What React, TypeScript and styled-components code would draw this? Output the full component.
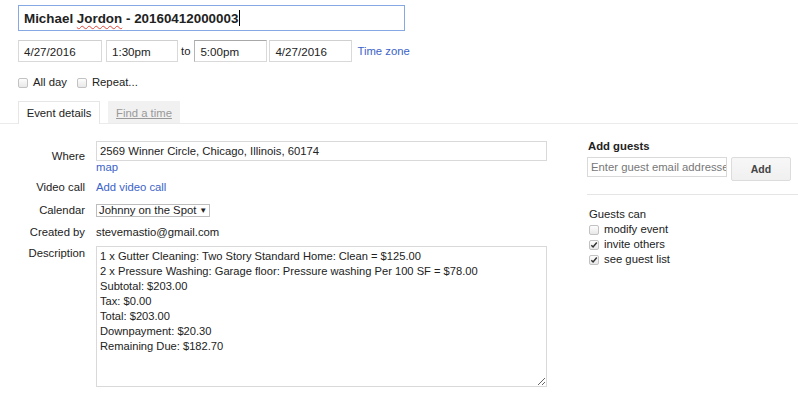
import React, { FC } from 'react';
import styled, { createGlobalStyle } from 'styled-components';

const GlobalStyle = createGlobalStyle`
  html, body {
    margin: 0;
    padding: 0;
    background: #fff;
  }
  body {
    font-family: "Liberation Sans", Arial, sans-serif;
    font-size: 11.3px;
    color: #222;
  }
`;

const Page = styled.div`
  width: 798px;
  height: 394px;
  overflow: hidden;
  padding-top: 5px;
  box-sizing: border-box;
`;

const Header = styled.div`
  padding-left: 18px;
`;

const TitleBox = styled.div`
  width: 387px;
  height: 26px;
  box-sizing: border-box;
  border: 1px solid #86a9e3;
  padding-left: 5px;
  display: flex;
  align-items: center;
  font-weight: bold;
  font-size: 13.4px;
  color: #222;
  white-space: nowrap;
`;

const Misspelled = styled.span`
  text-decoration: underline wavy #e0453a;
  text-decoration-thickness: 1px;
  text-underline-offset: 2px;
`;

const Caret = styled.span`
  display: inline-block;
  width: 1px;
  height: 16px;
  background: #000;
  margin-left: 1px;
`;

const DateRow = styled.div`
  display: flex;
  align-items: center;
  margin-top: 9px;
  height: 22px;
`;

const DateInput = styled.div<{ $w: number; $gap: number; $active?: boolean }>`
  width: ${(p) => p.$w}px;
  height: 22px;
  box-sizing: border-box;
  margin-left: ${(p) => p.$gap}px;
  border: 1px solid #d9d9d9;
  border-top-color: ${(p) => (p.$active ? '#a8a8a8' : '#d0d0d0')};
  border-left-color: ${(p) => (p.$active ? '#b4b4b4' : '#d9d9d9')};
  padding-left: 5px;
  display: flex;
  align-items: center;
  font-size: 11.6px;
  color: #222;
`;

const To = styled.span`
  margin-left: 3px;
  font-size: 11.3px;
`;

const Link = styled.a<{ $gap?: number }>`
  color: #3b63c9;
  text-decoration: none;
  margin-left: ${(p) => p.$gap ?? 0}px;
  cursor: pointer;
`;

const OptionRow = styled.div`
  display: flex;
  align-items: center;
  margin-top: 13px;
  height: 15px;
`;

const CheckItem = styled.label<{ $gap?: number }>`
  display: flex;
  align-items: center;
  margin-left: ${(p) => p.$gap ?? 0}px;
  line-height: 15px;
`;

const Box = styled.span`
  width: 10px;
  height: 10px;
  box-sizing: border-box;
  border: 1px solid #c2c2c2;
  border-radius: 2px;
  background: linear-gradient(#fdfdfd, #e8e8e8);
  margin-right: 5px;
  display: flex;
  align-items: center;
  justify-content: center;
`;

const Check: FC<{ checked?: boolean; label: string; gap?: number }> = ({ checked, label, gap }) => (
  <CheckItem $gap={gap}>
    <Box>
      {checked && (
        <svg width="8" height="8" viewBox="0 0 8 8">
          <path d="M1.3 4.2 L3.1 6 L6.8 1.6" fill="none" stroke="#333" strokeWidth="1.5" />
        </svg>
      )}
    </Box>
    {label}
  </CheckItem>
);

const TabBar = styled.div`
  display: flex;
  align-items: flex-end;
  margin-top: 11px;
  padding-left: 18px;
  height: 22px;
  border-bottom: 1px solid #ebebeb;
`;

const Tab = styled.div<{ $active?: boolean; $w: number; $gap?: number }>`
  width: ${(p) => p.$w}px;
  height: ${(p) => (p.$active ? 23 : 22)}px;
  box-sizing: border-box;
  margin-left: ${(p) => p.$gap ?? 0}px;
  margin-bottom: ${(p) => (p.$active ? -1 : 0)}px;
  display: flex;
  align-items: center;
  justify-content: center;
  padding-bottom: ${(p) => (p.$active ? 1 : 0)}px;
  background: ${(p) => (p.$active ? '#fff' : '#f1f1f1')};
  border: 1px solid ${(p) => (p.$active ? '#e6e6e6' : '#f1f1f1')};
  border-bottom: none;
  color: ${(p) => (p.$active ? '#222' : '#999')};
  text-decoration: ${(p) => (p.$active ? 'none' : 'underline')};
  font-size: 11.3px;
`;

const Body = styled.div`
  display: flex;
`;

const Details = styled.div`
  width: 587px;
`;

const Row = styled.div<{ $top: number }>`
  display: grid;
  grid-template-columns: 85px 451px;
  column-gap: 11px;
  margin-top: ${(p) => p.$top}px;
`;

const Label = styled.div<{ $pad?: number }>`
  text-align: right;
  line-height: 15px;
  padding-top: ${(p) => p.$pad ?? 0}px;
  color: #222;
`;

const TextInput = styled.div`
  height: 20px;
  box-sizing: border-box;
  border: 1px solid #d9d9d9;
  padding-left: 3px;
  display: flex;
  align-items: center;
  color: #222;
`;

const MapLink = styled(Link)`
  display: block;
  line-height: 12px;
`;

const LineLink = styled(Link)`
  line-height: 15px;
`;

const Select = styled.div`
  display: inline-flex;
  align-items: center;
  width: 114px;
  height: 13px;
  margin-top: 1px;
  box-sizing: border-box;
  border: 1px solid #bdbdbd;
  padding-left: 2px;
  line-height: 11px;
  color: #222;
  gap: 3px;
`;

const Arrow = styled.span`
  font-size: 8px;
`;

const Plain = styled.div`
  line-height: 15px;
`;

const Description = styled.textarea`
  display: block;
  width: 451px;
  height: 141px;
  margin: 0;
  box-sizing: border-box;
  border: 1px solid #d9d9d9;
  padding: 2px 3px;
  font-family: "Liberation Sans", Arial, sans-serif;
  font-size: 11.15px;
  line-height: 15px;
  color: #222;
  outline: none;
  resize: both;
`;

const Side = styled.div`
  flex: 1;
  padding-top: 15px;
`;

const SideHead = styled.div<{ $bold?: boolean }>`
  padding-left: 1px;
  line-height: 15px;
  font-weight: ${(p) => (p.$bold ? 'bold' : 'normal')};
  color: #222;
`;

const GuestRow = styled.div`
  display: flex;
  align-items: flex-start;
  margin-top: 3px;
  gap: 4px;
`;

const GuestInput = styled.input`
  width: 140px;
  height: 20px;
  box-sizing: border-box;
  margin: 0;
  border: 1px solid #d9d9d9;
  border-radius: 0;
  padding: 0 0 0 3px;
  font-family: "Liberation Sans", Arial, sans-serif;
  font-size: 11.3px;
  outline: none;
  color: #222;

  &::placeholder {
    color: #777;
  }
`;

const AddButton = styled.div`
  width: 60px;
  height: 24px;
  box-sizing: border-box;
  border: 1px solid #dcdcdc;
  border-radius: 2px;
  background: linear-gradient(#f7f7f7, #f0f0f0);
  display: flex;
  align-items: center;
  justify-content: center;
  font-weight: bold;
  font-size: 10.5px;
  color: #444;
`;

const Divider = styled.div`
  margin-top: 13px;
  border-top: 1px solid #e5e5e5;
`;

const GuestsCan = styled.div`
  margin-top: 12px;
  padding-left: 1px;
`;

const descriptionText = [
  '1 x Gutter Cleaning: Two Story Standard Home: Clean = $125.00',
  '2 x Pressure Washing: Garage floor: Pressure washing Per 100 SF = $78.00',
  'Subtotal: $203.00',
  'Tax: $0.00',
  'Total: $203.00',
  'Downpayment: $20.30',
  'Remaining Due: $182.70',
].join('\n');

const App: FC = () => {
  return (
    <Page>
      <GlobalStyle />
      <Header>
        <TitleBox>
          Michael&nbsp;<Misspelled>Jordon</Misspelled>&nbsp;- 20160412000003
          <Caret />
        </TitleBox>
        <DateRow>
          <DateInput $w={84} $gap={0}>4/27/2016</DateInput>
          <DateInput $w={72} $gap={4}>1:30pm</DateInput>
          <To>to</To>
          <DateInput $w={73} $gap={4} $active>5:00pm</DateInput>
          <DateInput $w={83} $gap={2}>4/27/2016</DateInput>
          <Link $gap={5}>Time zone</Link>
        </DateRow>
        <OptionRow>
          <Check label="All day" />
          <Check label="Repeat..." gap={10} />
        </OptionRow>
      </Header>
      <TabBar>
        <Tab $active $w={82}>Event details</Tab>
        <Tab $w={72} $gap={8}>Find a time</Tab>
      </TabBar>
      <Body>
        <Details>
          <Row $top={17}>
            <Label $pad={8}>Where</Label>
            <div>
              <TextInput>2569 Winner Circle, Chicago, Illinois, 60174</TextInput>
              <MapLink>map</MapLink>
            </div>
          </Row>
          <Row $top={7}>
            <Label>Video call</Label>
            <div>
              <LineLink>Add video call</LineLink>
            </div>
          </Row>
          <Row $top={8}>
            <Label>Calendar</Label>
            <div>
              <Select>
                Johnny on the Spot <Arrow>▼</Arrow>
              </Select>
            </div>
          </Row>
          <Row $top={7}>
            <Label>Created by</Label>
            <Plain>stevemastio@gmail.com</Plain>
          </Row>
          <Row $top={6}>
            <Label $pad={0}>Description</Label>
            <Description readOnly defaultValue={descriptionText} />
          </Row>
        </Details>
        <Side>
          <SideHead $bold>Add guests</SideHead>
          <GuestRow>
            <GuestInput placeholder="Enter guest email addresses" />
            <AddButton>Add</AddButton>
          </GuestRow>
          <Divider />
          <GuestsCan>
            <SideHead>Guests can</SideHead>
            <Check label="modify event" gap={1} />
            <Check label="invite others" gap={1} checked />
            <Check label="see guest list" gap={1} checked />
          </GuestsCan>
        </Side>
      </Body>
    </Page>
  );
};

export default App;
